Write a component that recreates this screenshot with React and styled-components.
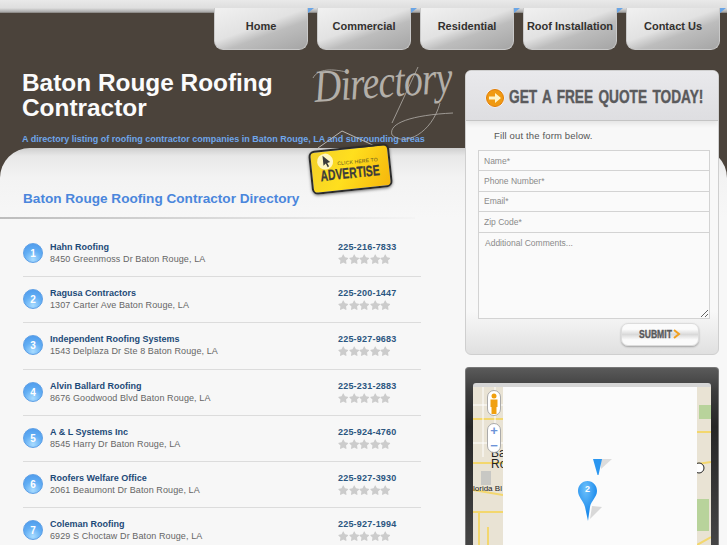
import React from "react";
import styled, { createGlobalStyle } from "styled-components";
import { FaStar } from "react-icons/fa";

const GlobalStyle = createGlobalStyle`
  html, body {
    margin: 0;
    padding: 0;
    background: #f7f7f7;
    overflow: hidden;
  }
  * { box-sizing: border-box; }
`;

const Page = styled.div`
  position: relative;
  width: 727px;
  height: 545px;
  overflow: hidden;
  font-family: "Liberation Sans", Arial, sans-serif;
  background: linear-gradient(#4b433b 190px, #f7f7f7 190px);
`;

const TopStrip = styled.div`
  height: 13px;
  background: linear-gradient(#e9e9e9 0, #dedede 8px, #a8a8a8 12px, #77736e 13px);
`;

const Hero = styled.header`
  position: relative;
  display: flow-root;
  height: 135px;
  padding-left: 22px;
`;

const Nav = styled.nav`
  display: flex;
  justify-content: flex-end;
  gap: 9px;
  margin-top: -5px;
  padding-right: 7px;
`;

const NavItem = styled.a`
  position: relative;
  display: block;
  width: 94px;
  height: 42px;
  padding-top: 12px;
  text-align: center;
  font-size: 11px;
  font-weight: bold;
  color: #33312f;
  background: linear-gradient(160deg, #f1f1f1 0, #e2e2e2 45%, #bdbdbd 62%, #a5a5a5 100%);
  border: 1px solid #c9c9c9;
  border-top: 0;
  border-radius: 0 0 9px 9px;

  &::after {
    content: "";
    position: absolute;
    top: 0;
    right: -7px;
    border-top: 5px solid #6aa5e6;
    border-right: 6px solid transparent;
  }
`;

const Title = styled.h1`
  margin: 20px 0 0;
  width: 270px;
  font-size: 24.4px;
  line-height: 25px;
  font-weight: bold;
  color: #fbfbfb;
`;

const Tagline = styled.p`
  margin: 14px 0 0;
  font-size: 9px;
  line-height: 11px;
  font-weight: bold;
  color: #6fa6ea;
`;

const ScriptWord = styled.span`
  position: absolute;
  left: 314px;
  top: 49px;
  font-family: "Liberation Serif", serif;
  font-style: italic;
  font-size: 46px;
  line-height: 50px;
  letter-spacing: -1px;
  color: #b3afa9;
  transform: rotate(-4deg) scaleX(0.82);
  transform-origin: left center;
`;

const Flourish = styled.svg`
  position: absolute;
  left: 300px;
  top: 50px;
`;

const Panel = styled.main`
  display: grid;
  grid-template-columns: 465px 254px;
  height: 397px;
  border-radius: 30px 30px 0 0;
  background: linear-gradient(#cfcfcf 0, #e8e8e8 8px, #f3f3f3 30px, #f7f7f7 70px);
`;

const Directory = styled.section`
  min-width: 0;
`;

const DirectoryHead = styled.div`
  height: 71px;
  padding: 43px 0 0 23px;
  width: 415px;
  border-bottom: 2px solid transparent;
  border-image: linear-gradient(90deg, #bdbdbd, #e4e4e4 70%, #f4f4f4) 1;
`;

const DirectoryTitle = styled.h2`
  margin: 0;
  font-size: 13.6px;
  line-height: 16px;
  font-weight: bold;
  color: #4a86dc;
`;

const List = styled.ol`
  list-style: none;
  margin: 12px 44px 0 23px;
  padding: 0;
`;

const Row = styled.li`
  display: flex;
  height: 46.2px;
  padding-top: 12px;
  border-bottom: 1px solid #dcdcdc;
`;

const Badge = styled.span`
  flex: none;
  width: 20px;
  height: 20px;
  margin-right: 7px;
  border-radius: 50%;
  text-align: center;
  font-size: 10px;
  line-height: 19px;
  font-weight: bold;
  color: #fff;
  border: 1px solid #5d9fe6;
  background: radial-gradient(circle at 50% 85%, #a9dcff 0, #62aef4 50%, #4a97ea 100%);
`;

const Info = styled.div`
  flex: 1;
  margin-top: -2px;
`;

const Name = styled.div`
  font-size: 9px;
  line-height: 12px;
  font-weight: bold;
  color: #1d4a78;
`;

const Address = styled.div`
  font-size: 9px;
  line-height: 12px;
  letter-spacing: 0.1px;
  color: #666;
`;

const Contact = styled.div`
  flex: none;
  width: 83px;
  margin-top: -2px;
`;

const Phone = styled.div`
  font-size: 9px;
  line-height: 12px;
  font-weight: bold;
  letter-spacing: 0.2px;
  color: #2b5680;
`;

const Stars = styled.div`
  display: flex;
  margin-top: 1px;
  color: #cccccc;
  font-size: 10.5px;
`;

const Sidebar = styled.aside`
  display: flex;
  flex-direction: column;
  gap: 12px;
  margin-top: -78px;
`;

const QuoteCard = styled.form`
  height: 285px;
  border: 1px solid #cfcfcf;
  border-radius: 6px;
  overflow: hidden;
  background: linear-gradient(#f8f8f8 0, #f8f8f8 240px, #e0e0e0 100%);
`;

const QuoteHead = styled.div`
  display: flex;
  align-items: center;
  gap: 4px;
  height: 50px;
  padding: 4px 0 0 19px;
  background: linear-gradient(#e9e9ec, #dedee1);
  border-bottom: 1px solid #c4c4c4;
  box-shadow: 0 3px 5px rgba(0, 0, 0, 0.08);

  svg {
    flex: none;
  }
`;

const QuoteTitle = styled.h3`
  margin: 0;
  white-space: nowrap;
  font-size: 18px;
  font-weight: bold;
  word-spacing: 2px;
  color: #5a5a5c;
  -webkit-text-stroke: 0.4px #5a5a5c;
  transform: scaleX(0.76);
  transform-origin: left center;
`;

const FormNote = styled.p`
  margin: 9px 0 8px 28px;
  font-size: 9.5px;
  line-height: 12px;
  letter-spacing: 0.15px;
  color: #555;
`;

const Fields = styled.div`
  display: flex;
  flex-direction: column;
  margin: 0 8px 0 12px;
  border: 1px solid #d3d3d3;
`;

const Input = styled.input`
  display: block;
  height: 20.4px;
  padding: 0 5px;
  border: 0;
  border-bottom: 1px solid #d3d3d3;
  outline: 0;
  background: #fafafa;
  font: 8.5px "Liberation Sans", sans-serif;

  &::placeholder {
    color: #8a8a8a;
    opacity: 1;
  }
`;

const Comments = styled.textarea`
  display: block;
  height: 85px;
  padding: 5px 6px;
  border: 0;
  outline: 0;
  background: #fafafa;
  font: 8.5px "Liberation Sans", sans-serif;

  &::placeholder {
    color: #8a8a8a;
    opacity: 1;
  }
`;

const SubmitRow = styled.div`
  display: flex;
  justify-content: flex-end;
  padding: 4px 19px 0 0;
`;

const Submit = styled.button`
  display: flex;
  align-items: center;
  justify-content: center;
  width: 78px;
  height: 23px;
  padding: 0;
  border: 1px solid #dcdcdc;
  border-radius: 7px;
  background: linear-gradient(#fbfbfb 0, #fbfbfb 25%, #d9d9d9 50%, #fbfbfb 75%);
  box-shadow: 0 1px 2px rgba(0, 0, 0, 0.3);
`;

const SubmitLabel = styled.span`
  width: 34px;
  font-family: "Liberation Sans", sans-serif;
  font-size: 11px;
  font-weight: bold;
  white-space: nowrap;
  color: #58585a;
  -webkit-text-stroke: 0.3px #58585a;
  transform: scaleX(0.78);
  transform-origin: left center;
`;

const MapCard = styled.div`
  flex: 1;
  padding: 15px 7px 0;
  border: 1px solid #777;
  border-bottom: 0;
  border-radius: 4px 4px 0 0;
  background: linear-gradient(#5a5a5a 0, #3c3c3c 12%, #262626 30%, #4a4a4a 100%);
`;

const MapFrame = styled.div`
  position: relative;
  display: grid;
  grid-template-columns: 30px 194px 14px;
  height: 180px;
  padding-top: 4px;
  overflow: hidden;
  border-radius: 3px 3px 0 0;
  background: #d6d6d6;
`;

const MapStrip = styled.div`
  position: relative;
  overflow: hidden;
  background: #e9e3d4;
`;

const MapBlank = styled.div`
  position: relative;
  background: #fbfbfb;
`;

const MapControl = styled.div`
  position: absolute;
  left: 14px;
  top: ${(p) => p.$top}px;
  width: 14px;
  height: ${(p) => p.$height}px;
  border: 1px solid #aaa;
  border-radius: 7px;
  background: #fff;
`;

const ZoomSign = styled.div`
  height: 15px;
  text-align: center;
  font-size: 13px;
  line-height: 13px;
  font-weight: bold;
  color: #6c93d8;
`;

const MapLabel = styled.span`
  position: absolute;
  left: ${(p) => p.$left}px;
  top: ${(p) => p.$top}px;
  white-space: nowrap;
  font-size: ${(p) => p.$size}px;
  line-height: 1;
  color: #222;
`;

const Pin = styled.svg`
  position: absolute;
  left: ${(p) => p.$left}px;
  top: ${(p) => p.$top}px;
`;

const PinNumber = styled.span`
  position: absolute;
  left: 112px;
  top: 101px;
  font-size: 9px;
  font-weight: bold;
  color: #fff;
`;

const Sign = styled.a`
  position: absolute;
  left: 310px;
  top: 147px;
  z-index: 2;
  display: block;
  width: 81px;
  height: 44px;
  padding: 10px 0 0 8px;
  border: 2px solid #2b2b2b;
  border-radius: 6px;
  background: linear-gradient(120deg, #f2cf2a 0, #ffdf1e 45%, #f6b60c 100%);
  box-shadow: 0 1px 3px rgba(0, 0, 0, 0.5);
  transform: rotate(-6deg);
`;

const SignCursor = styled.svg`
  position: absolute;
  left: 5px;
  top: 1px;
`;

const SignSmall = styled.div`
  padding-left: 18px;
  white-space: nowrap;
  font-size: 5px;
  line-height: 6px;
  letter-spacing: 0.2px;
  color: #5a5320;
`;

const SignBig = styled.div`
  white-space: nowrap;
  font-size: 15px;
  line-height: 15px;
  font-weight: bold;
  color: #3b3b3b;
  -webkit-text-stroke: 0.3px #3b3b3b;
  transform: scaleX(0.69);
  transform-origin: left center;
`;

const SignString = styled.svg`
  position: absolute;
  left: 315px;
  top: 128px;
  z-index: 1;
`;

const companies = [
  ["Hahn Roofing", "8450 Greenmoss Dr Baton Rouge, LA", "225-216-7833"],
  ["Ragusa Contractors", "1307 Carter Ave Baton Rouge, LA", "225-200-1447"],
  ["Independent Roofing Systems", "1543 Delplaza Dr Ste 8 Baton Rouge, LA", "225-927-9683"],
  ["Alvin Ballard Roofing", "8676 Goodwood Blvd Baton Rouge, LA", "225-231-2883"],
  ["A & L Systems Inc", "8545 Harry Dr Baton Rouge, LA", "225-924-4760"],
  ["Roofers Welfare Office", "2061 Beaumont Dr Baton Rouge, LA", "225-927-3930"],
  ["Coleman Roofing", "6929 S Choctaw Dr Baton Rouge, LA", "225-927-1994"],
];

const navLinks = ["Home", "Commercial", "Residential", "Roof Installation", "Contact Us"];

const App = () => (
  <Page>
    <GlobalStyle />
    <TopStrip />
    <Hero>
      <Nav>
        {navLinks.map((link) => (
          <NavItem key={link}>{link}</NavItem>
        ))}
      </Nav>
      <Title>Baton Rouge Roofing Contractor</Title>
      <Tagline>A directory listing of roofing contractor companies in Baton Rouge, LA and surrounding areas</Tagline>
      <ScriptWord>Directory</ScriptWord>
      <Flourish width="170" height="90" viewBox="0 0 170 90" fill="none" stroke="#b3afa9" strokeWidth="0.8">
        <path d="M13 15 C18 5 34 6 46 9" />
        <path d="M118 4 L92 60" />
        <path d="M140 40 C132 70 105 84 92 72 C88 60 112 52 153 50" />
      </Flourish>
    </Hero>
    <SignString width="70" height="24" viewBox="0 0 70 24" fill="none" stroke="#b9b5ae" strokeWidth="1">
      <path d="M3 20 L27 3 L62 19" />
    </SignString>
    <Sign>
      <SignCursor width="18" height="18" viewBox="0 0 18 18">
        <circle cx="9" cy="9" r="8" fill="#fff6c0" />
        <path d="M7 3 L7 13 L9.500 11 L11 15 L12.500 14 L11 10.500 L14 10z" fill="#3b3b3b" />
      </SignCursor>
      <SignSmall>CLICK HERE TO</SignSmall>
      <SignBig>ADVERTISE</SignBig>
    </Sign>
    <Panel>
      <Directory>
        <DirectoryHead>
          <DirectoryTitle>Baton Rouge Roofing Contractor Directory</DirectoryTitle>
        </DirectoryHead>
        <List>
          {companies.map(([name, address, phone], i) => (
            <Row key={name}>
              <Badge>{i + 1}</Badge>
              <Info>
                <Name>{name}</Name>
                <Address>{address}</Address>
              </Info>
              <Contact>
                <Phone>{phone}</Phone>
                <Stars>
                  {[0, 1, 2, 3, 4].map((s) => (
                    <FaStar key={s} />
                  ))}
                </Stars>
              </Contact>
            </Row>
          ))}
        </List>
      </Directory>
      <Sidebar>
        <QuoteCard>
          <QuoteHead>
            <svg width="20" height="20" viewBox="0 0 20 20">
              <circle cx="10" cy="10" r="9.5" fill="#f7f7f7" />
              <circle cx="10" cy="10" r="8.5" fill="#f09a12" stroke="#e07c08" />
              <path d="M4 8.500h6V5l6 5-6 5v-3.500H4z" fill="#fff4c8" />
            </svg>
            <QuoteTitle>GET A FREE QUOTE TODAY!</QuoteTitle>
          </QuoteHead>
          <FormNote>Fill out the form below.</FormNote>
          <Fields>
            <Input placeholder="Name*" />
            <Input placeholder="Phone Number*" />
            <Input placeholder="Email*" />
            <Input placeholder="Zip Code*" />
            <Comments placeholder="Additional Comments..." />
          </Fields>
          <SubmitRow>
            <Submit type="button">
              <SubmitLabel>SUBMIT</SubmitLabel>
              <svg width="8" height="10" viewBox="0 0 8 10" fill="none" stroke="#f0a020" strokeWidth="2">
                <path d="M1 1 L6 5 L1 9" />
              </svg>
            </Submit>
          </SubmitRow>
        </QuoteCard>
        <MapCard>
          <MapFrame>
            <MapStrip>
              <svg width="30" height="176" viewBox="0 0 30 176">
                <g fill="none" stroke="#f3d76e" strokeWidth="2">
                  <path d="M0 32H30M0 76H30M0 103L30 108" />
                  <path d="M0 125H30M6 125V176M15 140V176" />
                </g>
                <g fill="none" stroke="#fff" strokeWidth="1">
                  <path d="M0 18H30M0 56H30M10 0V70M22 0V60" />
                </g>
                <rect x="8" y="84" width="10" height="14" fill="#c8c8c4" />
              </svg>
              <MapLabel $left={18} $top={60} $size={12}>Ba</MapLabel>
              <MapLabel $left={18} $top={71} $size={12}>Ro</MapLabel>
              <MapLabel $left={0} $top={98} $size={8}>lorida Bl</MapLabel>
            </MapStrip>
            <MapBlank>
              <Pin $left={90} $top={72} width="24" height="16" viewBox="0 0 24 16">
                <path d="M8 0 L19 0 L8 10z" fill="#dcdcdc" />
                <path d="M0 0H9L5.500 16H4.500z" fill="#2a96f0" />
              </Pin>
            </MapBlank>
            <MapStrip>
              <svg width="14" height="176" viewBox="0 0 14 176">
                <rect x="2" y="18" width="12" height="14" fill="#b8d39b" />
                <rect x="0" y="112" width="12" height="32" fill="#b8d39b" />
                <g fill="none" stroke="#f3d76e" strokeWidth="2">
                  <path d="M0 45H14M0 77L14 75M0 158L14 150M0 170L14 166" />
                </g>
                <circle cx="2" cy="81" r="5" fill="#fff" stroke="#222" />
              </svg>
            </MapStrip>
            <MapControl $top={7} $height={26}>
              <svg width="12" height="24" viewBox="0 0 12 24">
                <circle cx="6" cy="5" r="2.500" fill="#f0a010" />
                <path d="M2.500 8.500h7v7.500H8.500V23h-5v-7h-1z" fill="#f0a010" />
              </svg>
            </MapControl>
            <MapControl $top={40} $height={30}>
              <ZoomSign>+</ZoomSign>
              <ZoomSign>−</ZoomSign>
            </MapControl>
            <Pin $left={105} $top={98} width="30" height="41" viewBox="0 0 30 41">
              <defs>
                <radialGradient id="pinFill" cx="0.4" cy="0.2" r="0.6">
                  <stop offset="0" stopColor="#6cc0fb" />
                  <stop offset="1" stopColor="#1e8cec" />
                </radialGradient>
              </defs>
              <path d="M12 38 L24 26 L14 25z" fill="#d8d8d8" />
              <path d="M9.500 0C4 0 0 4.500 0 10C0 16 5 19 7 26L10 40L12 26C13 20 19 16 19 10C19 4.500 15 0 9.500 0Z" fill="url(#pinFill)" />
            </Pin>
            <PinNumber>2</PinNumber>
          </MapFrame>
        </MapCard>
      </Sidebar>
    </Panel>
  </Page>
);

export default App;
